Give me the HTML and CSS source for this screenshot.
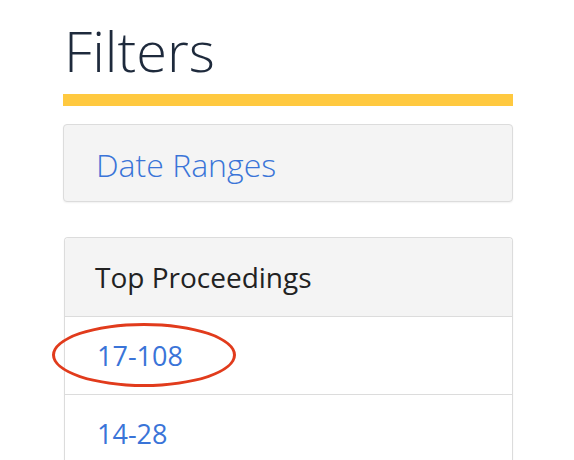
FILE: index.html
```html
<!DOCTYPE html>
<html>
<head>
<meta charset="utf-8">
<link rel="stylesheet" href="styles.css">
</head>
<body>
<div class="sidebar">
  <h1 class="title">Filters</h1>
  <div class="title-bar"></div>
  <div class="panel panel-collapsed">
    <a class="panel-link" href="#">Date Ranges</a>
  </div>
  <div class="panel panel-list">
    <div class="panel-heading">Top Proceedings</div>
    <ul class="list">
      <li class="list-item highlighted"><a href="#">17-108</a><span class="circle"></span></li>
      <li class="list-item"><a href="#">14-28</a></li>
    </ul>
  </div>
</div>
</body>
</html>
```
FILE: styles.css
```css
html, body {
  margin: 0;
  padding: 0;
  background: #fff;
  font-family: "Open Sans", "Noto Sans", sans-serif;
}
.sidebar {
  width: 450px;
  margin-left: 63px;
  padding-top: 12px;
}
.title {
  margin: 0;
  padding-left: 1px;
  font-size: 56px;
  font-weight: 300;
  line-height: 76px;
  color: #1e2a3c;
}
.title-bar {
  height: 12px;
  margin-top: 6px;
  background: #ffc940;
}
.panel {
  border: 1px solid #dcdcdc;
  border-radius: 4px;
  box-shadow: 0 1px 2px rgba(0,0,0,0.06);
}
.panel-collapsed {
  margin-top: 18px;
  height: 76px;
  background: #f4f4f4;
  display: flex;
  align-items: center;
  padding-left: 32px;
}
.panel-link {
  color: #3a74d8;
  text-decoration: none;
  font-size: 32px;
  font-weight: 300;
  position: relative;
  top: 1px;
}
.panel-list {
  margin-top: 35px;
  margin-left: 1px;
  border-bottom: none;
  border-radius: 4px 4px 0 0;
}
.panel-heading {
  height: 78px;
  background: #f4f4f4;
  border-bottom: 1px solid #dcdcdc;
  display: flex;
  align-items: center;
  padding-left: 30px;
  font-size: 28px;
  color: #222;
  border-radius: 4px 4px 0 0;
}
.list {
  list-style: none;
  margin: 0;
  padding: 0;
}
.list-item {
  height: 77px;
  border-bottom: 1px solid #dcdcdc;
  display: flex;
  align-items: center;
  padding-left: 32px;
}
.highlighted {
  position: relative;
}
.list-item a {
  color: #3a74d8;
  text-decoration: none;
  font-size: 27px;
}
.circle {
  position: absolute;
  left: -13px;
  top: 6px;
  width: 178px;
  height: 58px;
  border: 3px solid #e13b1c;
  border-radius: 50%;
}
```
